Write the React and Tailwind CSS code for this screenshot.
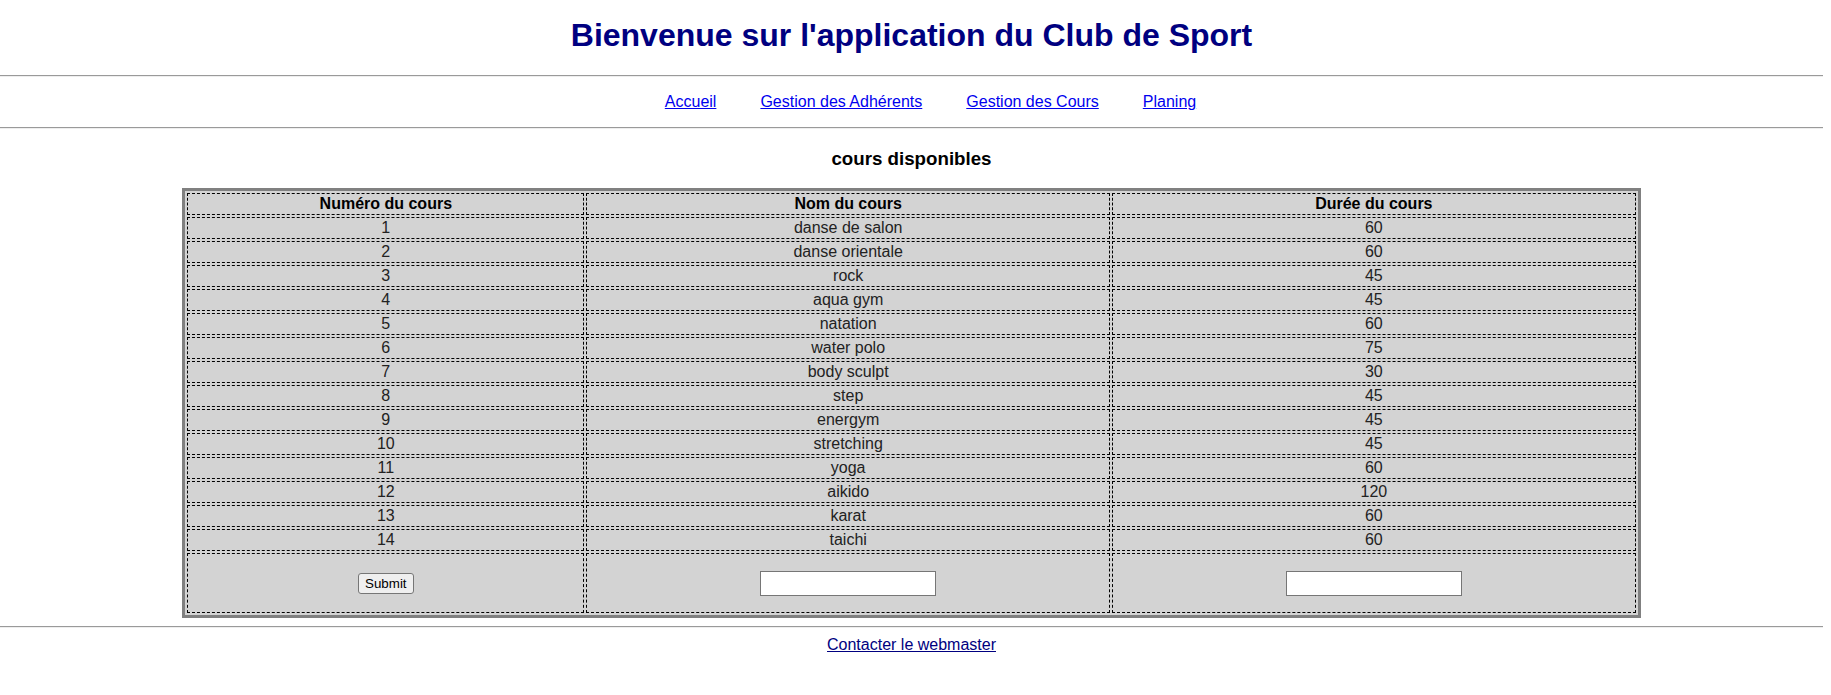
import React from "react";

const cours = [
  { id: 1, nom: "danse de salon", duree: 60 },
  { id: 2, nom: "danse orientale", duree: 60 },
  { id: 3, nom: "rock", duree: 45 },
  { id: 4, nom: "aqua gym", duree: 45 },
  { id: 5, nom: "natation", duree: 60 },
  { id: 6, nom: "water polo", duree: 75 },
  { id: 7, nom: "body sculpt", duree: 30 },
  { id: 8, nom: "step", duree: 45 },
  { id: 9, nom: "energym", duree: 45 },
  { id: 10, nom: "stretching", duree: 45 },
  { id: 11, nom: "yoga", duree: 60 },
  { id: 12, nom: "aikido", duree: 120 },
  { id: 13, nom: "karat", duree: 60 },
  { id: 14, nom: "taichi", duree: 60 },
];

const links = ["Accueil", "Gestion des Adhérents", "Gestion des Cours", "Planing"];

const Rule = () => (
  <div className="h-0 border-t border-b border-t-[#9a9a9a] border-b-[#eeeeee]"></div>
);

const cell = "border border-dashed border-black p-[1px] text-center leading-[18px]";

const App = () => {
  return (
    <div className="w-[1823px] bg-white text-black font-['Liberation_Sans',Arial,sans-serif] text-[16px] leading-[normal]">
      <h1 className="pt-[17px] pb-[21px] text-center text-[32px] font-bold leading-[normal] text-[#000080]">
        Bienvenue sur l'application du Club de Sport
      </h1>
      <Rule />
      <ul className="flex justify-center gap-[44px] py-4 pl-[38px] leading-[18px]">
        {links.map((l) => (
          <li key={l}>
            <a href="#" className="text-[#0000ee] underline">
              {l}
            </a>
          </li>
        ))}
      </ul>
      <Rule />
      <h3 className="mt-[19px] mb-[18px] text-center text-[18.72px] font-bold leading-[normal]">
        cours disponibles
      </h3>
      <table className="mx-auto w-[80%] border-separate border-spacing-[2px] border-[3px] border-solid border-[#808080] bg-[#d3d3d3]">
        <thead>
          <tr>
            <th className={cell + " font-bold"}>Numéro du cours</th>
            <th className={cell + " font-bold"}>Nom du cours</th>
            <th className={cell + " font-bold"}>Durée du cours</th>
          </tr>
        </thead>
        <tbody>
          {cours.map((c) => (
            <tr key={c.id}>
              <td className={cell + " text-[#222]"}>{c.id}</td>
              <td className={cell + " text-[#222]"}>{c.nom}</td>
              <td className={cell + " text-[#222]"}>{c.duree}</td>
            </tr>
          ))}
          <tr>
            <td className={cell + " py-[16.5px]"}>
              <button className="h-[21px] rounded-[3px] border border-[#767676] bg-[#efefef] px-[6px] text-[13.33px] leading-[normal] text-black">
                Submit
              </button>
            </td>
            <td className={cell + " py-[16.5px]"}>
              <input
                type="text"
                className="h-[25px] w-[176px] border border-[#767676] bg-white px-[2px] align-middle text-[13.33px]"
              />
            </td>
            <td className={cell + " py-[16.5px]"}>
              <input
                type="text"
                className="h-[25px] w-[176px] border border-[#767676] bg-white px-[2px] align-middle text-[13.33px]"
              />
            </td>
          </tr>
        </tbody>
      </table>
      <div className="mt-2">
        <Rule />
      </div>
      <div className="mt-[8px] text-center leading-[18px]">
        <a href="#" className="text-[#000080] underline">
          Contacter le webmaster
        </a>
      </div>
    </div>
  );
};

export default App;
